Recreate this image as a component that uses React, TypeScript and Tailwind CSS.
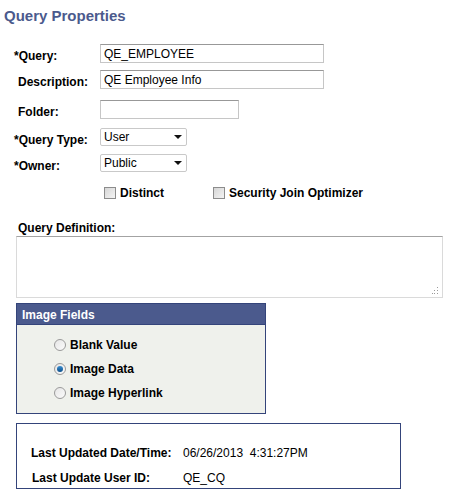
import React from 'react';

const labelCls = 'w-[86px] shrink-0 mt-[5px] text-[12px] leading-[14px] font-bold text-black';

function TextBox({ value, width }: { value?: string; width: string }) {
  return (
    <div
      className={`${width} h-[19px] flex items-center pl-[3px] border border-[#c6c6c6] border-t-[#989898] bg-white text-[12px] text-black`}
    >
      {value}
    </div>
  );
}

function DropDown({ value }: { value: string }) {
  return (
    <div className="w-[87px] h-[18px] flex items-center justify-between pl-[3px] pr-[4px] border border-[#c9c9c9] rounded-[2px] bg-white text-[12px] text-black">
      <span>{value}</span>
      <svg width="8" height="4" viewBox="0 0 8 4">
        <path d="M0 0h8L4 4z" fill="#111" />
      </svg>
    </div>
  );
}

function CheckBox({ label }: { label: string }) {
  return (
    <div className="flex items-center gap-[4px]">
      <span className="w-[12px] h-[12px] border border-[#8c8c8c] bg-gradient-to-br from-[#d6d6d6] to-[#f4f4f4]" />
      <span className="text-[12px] font-bold text-black">{label}</span>
    </div>
  );
}

function Radio({ label, checked }: { label: string; checked?: boolean }) {
  return (
    <div className="flex items-center gap-[4px] h-[14px]">
      <span className="w-[12px] h-[12px] rounded-full border border-[#9a9a9a] bg-gradient-to-br from-[#e6e6e6] to-[#fbfbfb] flex items-center justify-center">
        {checked && <span className="w-[6px] h-[6px] rounded-full bg-gradient-to-b from-[#3a8fd0] to-[#0b4f8a]" />}
      </span>
      <span className="text-[12px] font-bold text-black">{label}</span>
    </div>
  );
}

export default function App() {
  return (
    <div className="w-[454px] h-[493px] bg-white font-['Liberation_Sans',Arial,sans-serif] overflow-hidden">
      <h1 className="pt-[6px] pl-[4px] text-[15px] leading-[20px] font-bold text-[#4b5a8d]">Query Properties</h1>

      {/* property rows */}
      <div className="pl-[14px]">
        <div className="flex items-start h-[19px] mt-[18px]">
          <div className={labelCls}>*Query:</div>
          <TextBox value="QE_EMPLOYEE" width="w-[224px]" />
        </div>
        <div className="flex items-start h-[19px] mt-[7px]">
          <div className={`${labelCls} pl-[4px]`}>Description:</div>
          <TextBox value="QE Employee Info" width="w-[224px]" />
        </div>
        <div className="flex items-start h-[19px] mt-[11px]">
          <div className={`${labelCls} pl-[4px]`}>Folder:</div>
          <TextBox width="w-[139px]" />
        </div>
        <div className="flex items-start h-[19px] mt-[9px]">
          <div className={labelCls}>*Query Type:</div>
          <DropDown value="User" />
        </div>
        <div className="flex items-start h-[19px] mt-[7px]">
          <div className={labelCls}>*Owner:</div>
          <DropDown value="Public" />
        </div>
        <div className="flex items-center h-[14px] mt-[13px] pl-[90px]">
          <div className="w-[109px]">
            <CheckBox label="Distinct" />
          </div>
          <CheckBox label="Security Join Optimizer" />
        </div>
      </div>

      {/* query definition */}
      <div className="pl-[16px] mt-[21px]">
        <div className="pl-[2px] text-[12px] leading-[14px] font-bold text-black">Query Definition:</div>
        <div className="relative w-[427px] h-[62px] mt-[1px] border border-[#dadada] border-t-[#a3a3a3] bg-white">
          <svg className="absolute right-[3px] bottom-[3px]" width="7" height="7" viewBox="0 0 7 7">
            <g fill="#9a9a9a">
              <rect x="5" y="0" width="1" height="1" />
              <rect x="5" y="3" width="1" height="1" />
              <rect x="2" y="3" width="1" height="1" />
              <rect x="5" y="6" width="1" height="1" />
              <rect x="2" y="6" width="1" height="1" />
              <rect x="0" y="6" width="1" height="1" />
            </g>
          </svg>
        </div>
      </div>

      {/* image fields group */}
      <div className="ml-[16px] mt-[5px] w-[250px] h-[111px] border border-[#34447a] bg-[#eff1ec]">
        <div className="h-[21px] bg-[#4b5a8d] border-b border-[#34447a] pl-[5px] pt-[4px] text-[12px] leading-[14px] font-bold text-white">
          Image Fields
        </div>
        <div className="flex flex-col gap-[10px] pl-[37px] pt-[13px]">
          <Radio label="Blank Value" />
          <Radio label="Image Data" checked />
          <Radio label="Image Hyperlink" />
        </div>
      </div>

      {/* last update info */}
      <div className="ml-[16px] mt-[9px] w-[385px] h-[66px] border border-[#34447a] pt-[22px] pl-[14px]">
        <div className="flex text-[12px] leading-[14px] text-black">
          <span className="w-[152px] font-bold">Last Updated Date/Time:</span>
          <span className="whitespace-pre">06/26/2013  4:31:27PM</span>
        </div>
        <div className="flex text-[12px] leading-[14px] text-black mt-[11px]">
          <span className="w-[152px] pl-[1px] font-bold">Last Update User ID:</span>
          <span>QE_CQ</span>
        </div>
      </div>
    </div>
  );
}
